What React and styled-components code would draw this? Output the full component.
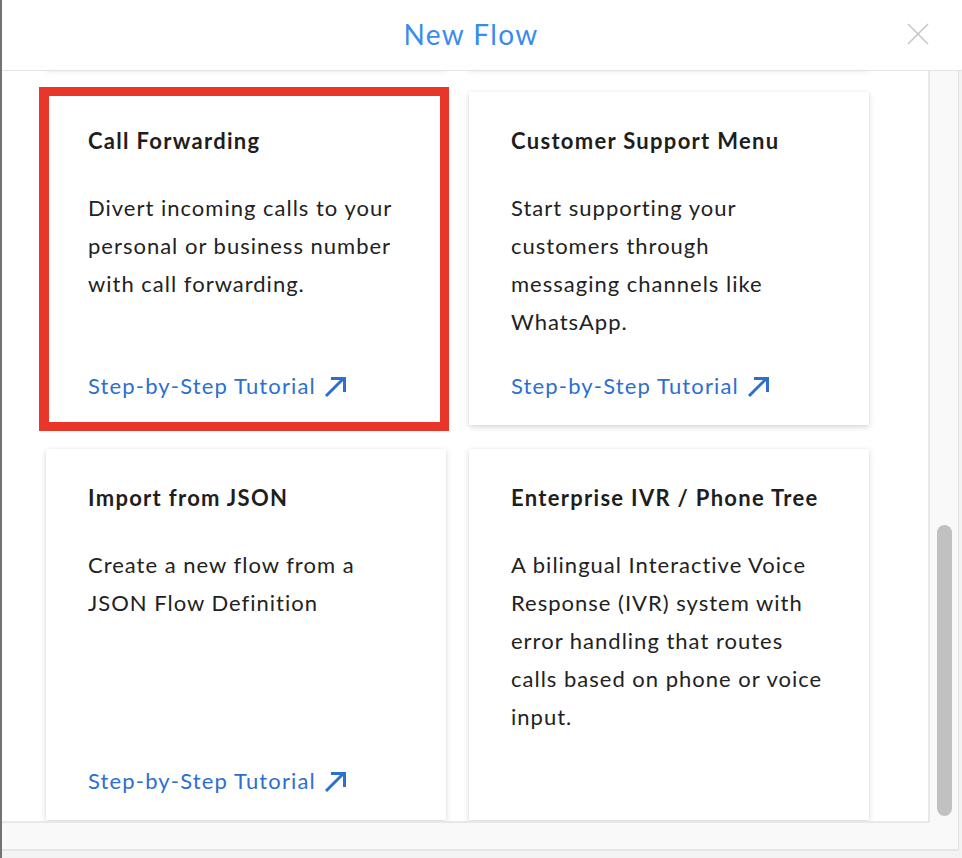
import React from "react";
import styled, { createGlobalStyle } from "styled-components";

const Global = createGlobalStyle`
  html, body { margin: 0; padding: 0; background: #f3f3f3; }
  body { font-family: Lato, "Noto Sans", "Liberation Sans", sans-serif; -webkit-font-smoothing: antialiased; }
  * { box-sizing: border-box; }
`;

const Frame = styled.div`
  width: 962px;
  height: 858px;
  display: flex;
  flex-direction: column;
  border-left: 2px solid #737373;
  background: #f3f3f3;
  overflow: hidden;
`;

const Header = styled.header`
  height: 71px;
  flex: none;
  display: grid;
  grid-template-columns: 1fr auto 1fr;
  align-items: center;
  padding: 0 22px 2px 0;
  background: #fff;
  border-bottom: 1px solid #e4e4e4;
`;

const Title = styled.h1`
  grid-column: 2;
  margin: 0;
  font-size: 28px;
  font-weight: 400;
  color: #3a8bee;
  letter-spacing: 1.4px;
  line-height: 34px;
`;

const CloseButton = styled.button`
  grid-column: 3;
  justify-self: end;
  margin-right: 11px;
  width: 23px;
  height: 23px;
  padding: 0;
  border: 0;
  background: none;
  display: flex;
  align-items: center;
  justify-content: center;
`;

const Panel = styled.div`
  width: 957px;
  height: 780px;
  flex: none;
  display: grid;
  grid-template-columns: 1fr 28px;
  grid-template-rows: 752px 1fr;
  background: #f9f9f9;
  border-right: 1px solid #e2e2e2;
  border-bottom: 2px solid #e6e6e6;
`;

const ScrollArea = styled.div`
  background: #fff;
  border-right: 2px solid #e8e8e8;
  border-bottom: 2px solid #e8e8e8;
  overflow: hidden;
  display: flex;
  flex-direction: column;
  justify-content: flex-end;
`;

const CardGrid = styled.div`
  flex: none;
  display: grid;
  grid-template-columns: 400px 400px;
  grid-template-rows: 333px 333px 371px;
  column-gap: 23px;
  row-gap: 24px;
  padding: 0 0 1px 44px;
`;

const Card = styled.div`
  position: relative;
  background: #fff;
  box-shadow: 0 2px 6px rgba(0, 0, 0, 0.16), 0 0 1px rgba(0, 0, 0, 0.08);
  padding: 35px 42px 24px;
  display: flex;
  flex-direction: column;
`;

const Highlight = styled.div`
  position: absolute;
  top: -5px;
  left: -7px;
  right: -3px;
  bottom: -6px;
  border: 9px solid #e8372a;
  border-left-width: 10px;
  z-index: 2;
  pointer-events: none;
`;

const CardTitle = styled.h2`
  margin: 0 0 34px;
  font-size: 22px;
  line-height: 28px;
  font-weight: 700;
  color: #1e1e1e;
  letter-spacing: 1.3px;
`;

const CardText = styled.p`
  margin: 0;
  max-width: ${(p) => p.$width}px;
  font-size: 22px;
  line-height: 38px;
  color: #222;
  letter-spacing: 1px;
`;

const TutorialLink = styled.a`
  margin-top: auto;
  display: inline-flex;
  align-items: center;
  gap: 8px;
  font-size: 22px;
  line-height: 30px;
  color: #2d6fcf;
  text-decoration: none;
  letter-spacing: 1.15px;
  align-self: flex-start;
`;

const Track = styled.div`
  display: flex;
  flex-direction: column;
  justify-content: flex-end;
  align-items: flex-start;
  padding: 0 0 7px 7px;
`;

const Thumb = styled.div`
  width: 15px;
  height: 291px;
  border-radius: 8px;
  background: #c1c1c1;
`;

const ArrowIcon = () => (
  <svg width="23" height="23" viewBox="0 0 23 23" fill="none" stroke="#2d6fcf" strokeWidth="3" strokeLinecap="butt" strokeLinejoin="miter">
    <path d="M2 21 L19.5 3.5" />
    <path d="M7 3.5 H20.5 V17" />
  </svg>
);

const CloseIcon = () => (
  <svg width="22" height="22" viewBox="0 0 22 22" stroke="#c7c7c7" strokeWidth="1.6" fill="none">
    <path d="M1 1 L21 21 M21 1 L1 21" />
  </svg>
);

const cards = [
  { title: "Appointment Reminders", text: "Send reminders to your customers and let them confirm or cancel.", link: true, width: 316 },
  { title: "Conference Line", text: "Connect callers to a shared conference line.", link: true, width: 316 },
  {
    title: "Call Forwarding",
    text: "Divert incoming calls to your personal or business number with call forwarding.",
    link: true,
    highlighted: true,
    width: 318,
  },
  {
    title: "Customer Support Menu",
    text: "Start supporting your customers through messaging channels like WhatsApp.",
    link: true,
    width: 300,
  },
  { title: "Import from JSON", text: "Create a new flow from a JSON Flow Definition", link: true, width: 300 },
  {
    title: "Enterprise IVR / Phone Tree",
    text: "A bilingual Interactive Voice Response (IVR) system with error handling that routes calls based on phone or voice input.",
    link: false,
    width: 318,
  },
];

export default function App() {
  return (
    <>
      <Global />
      <Frame>
        <Header>
          <Title>New Flow</Title>
          <CloseButton aria-label="Close">
            <CloseIcon />
          </CloseButton>
        </Header>
        <Panel>
          <ScrollArea>
            <CardGrid>
              {cards.map((c) => (
                <Card key={c.title}>
                  {c.highlighted && <Highlight />}
                  <CardTitle>{c.title}</CardTitle>
                  <CardText $width={c.width}>{c.text}</CardText>
                  {c.link && (
                    <TutorialLink href="#">
                      Step-by-Step Tutorial
                      <ArrowIcon />
                    </TutorialLink>
                  )}
                </Card>
              ))}
            </CardGrid>
          </ScrollArea>
          <Track>
            <Thumb />
          </Track>
        </Panel>
      </Frame>
    </>
  );
}
